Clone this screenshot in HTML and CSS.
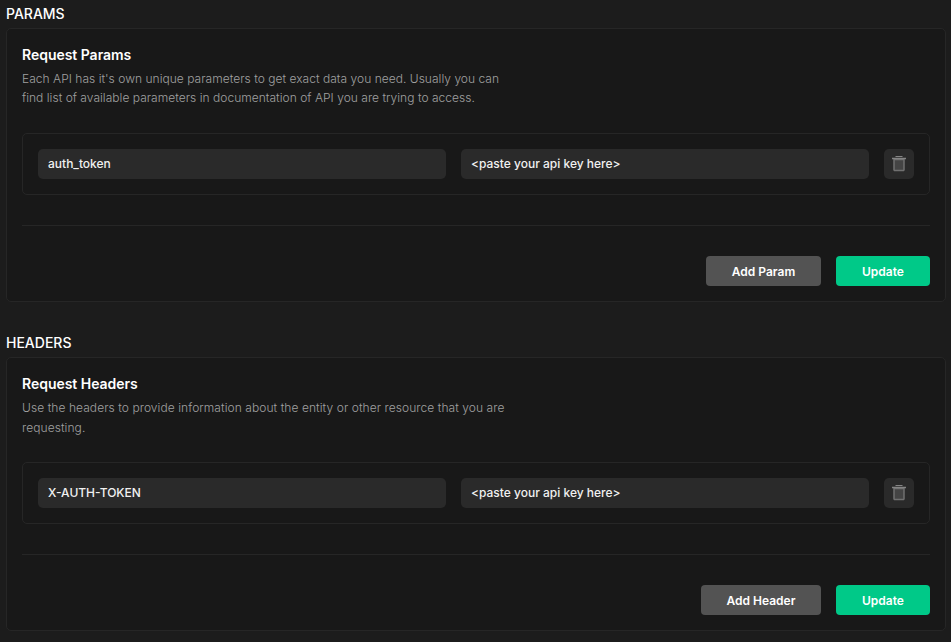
FILE: index.html
```html
<!DOCTYPE html>
<html lang="en">
<head>
<meta charset="utf-8">
<title>Request settings</title>
<link rel="stylesheet" href="styles.css">
</head>
<body>
<section class="section">
  <h2 class="section-title">PARAMS</h2>
  <div class="card">
    <h3 class="card-title">Request Params</h3>
    <p class="desc">Each API has it's own unique parameters to get exact data you need. Usually you can<br>find list of available parameters in documentation of API you are trying to access.</p>
    <div class="row">
      <div class="field">auth_token</div>
      <div class="field">&lt;paste your api key here&gt;</div>
      <button class="trash" aria-label="Delete"><svg width="14" height="16" viewBox="0 0 14 16"><path class="bin" d="M2 3.5h10v10.5l-.5 .5h-9l-.5-.5z"/><path class="lid" d="M0 2.5h14"/><path d="M3.5 .5h7"/></svg></button>
    </div>
    <div class="actions">
      <button class="btn add-param">Add Param</button>
      <button class="btn update">Update</button>
    </div>
  </div>
</section>
<section class="section">
  <h2 class="section-title">HEADERS</h2>
  <div class="card">
    <h3 class="card-title">Request Headers</h3>
    <p class="desc desc-headers">Use the headers to provide information about the entity or other resource that you are<br>requesting.</p>
    <div class="row">
      <div class="field">X-AUTH-TOKEN</div>
      <div class="field">&lt;paste your api key here&gt;</div>
      <button class="trash" aria-label="Delete"><svg width="14" height="16" viewBox="0 0 14 16"><path class="bin" d="M2 3.5h10v10.5l-.5 .5h-9l-.5-.5z"/><path class="lid" d="M0 2.5h14"/><path d="M3.5 .5h7"/></svg></button>
    </div>
    <div class="actions">
      <button class="btn add-header">Add Header</button>
      <button class="btn update">Update</button>
    </div>
  </div>
</section>
</body>
</html>
```
FILE: styles.css
```css
* { box-sizing: border-box; }
body { margin: 0; padding: 0 5px 0 6px; background: #1c1c1c; color: #fff; font-family: Inter, sans-serif; height: 642px; overflow: hidden; }
.section { height: 329px; }
h2, h3, p { margin: 0; }
.section-title { height: 28px; line-height: 28px; font-size: 14px; font-weight: 500; }
.card { height: 274px; padding: 15px; border: 1px solid #262626; border-radius: 5px; background: #181818; }
.card-title { height: 25px; line-height: 22px; font-size: 14px; font-weight: 600; letter-spacing: -0.03px; }
.desc { height: 64px; font-size: 12px; font-weight: 300; line-height: 19px; color: #a0a0a0; white-space: nowrap; letter-spacing: 0.03px; }
.desc-headers { line-height: 20px; letter-spacing: 0.07px; }
.row { display: flex; gap: 15px; height: 62px; padding: 15px; border: 1px solid #262626; border-radius: 5px; }
.field { flex: 1; height: 30px; padding: 0 10px; line-height: 30px; border-radius: 5px; background: #2a2a2a; color: #f1f1f1; font-size: 12px; font-weight: 500; }
.trash { display: flex; align-items: center; justify-content: center; width: 30px; height: 30px; padding: 0; border: 0; border-radius: 5px; background: #2a2a2a; }
.trash svg { fill: none; stroke: #858585; }
.trash .bin { fill: #444; stroke: #707070; stroke-width: 1.5; }
.trash .lid { stroke-width: 1.5; }
.actions { display: flex; justify-content: flex-end; gap: 15px; margin-top: 30px; padding-top: 30px; border-top: 1px solid #262626; }
.btn { height: 30px; padding: 0; border: 0; border-radius: 4px; background: #535353; color: #fff; font: 600 12px Inter, sans-serif; }
.add-param { width: 115px; }
.add-header { width: 120px; }
.update { width: 94px; background: #00c988; }
```
